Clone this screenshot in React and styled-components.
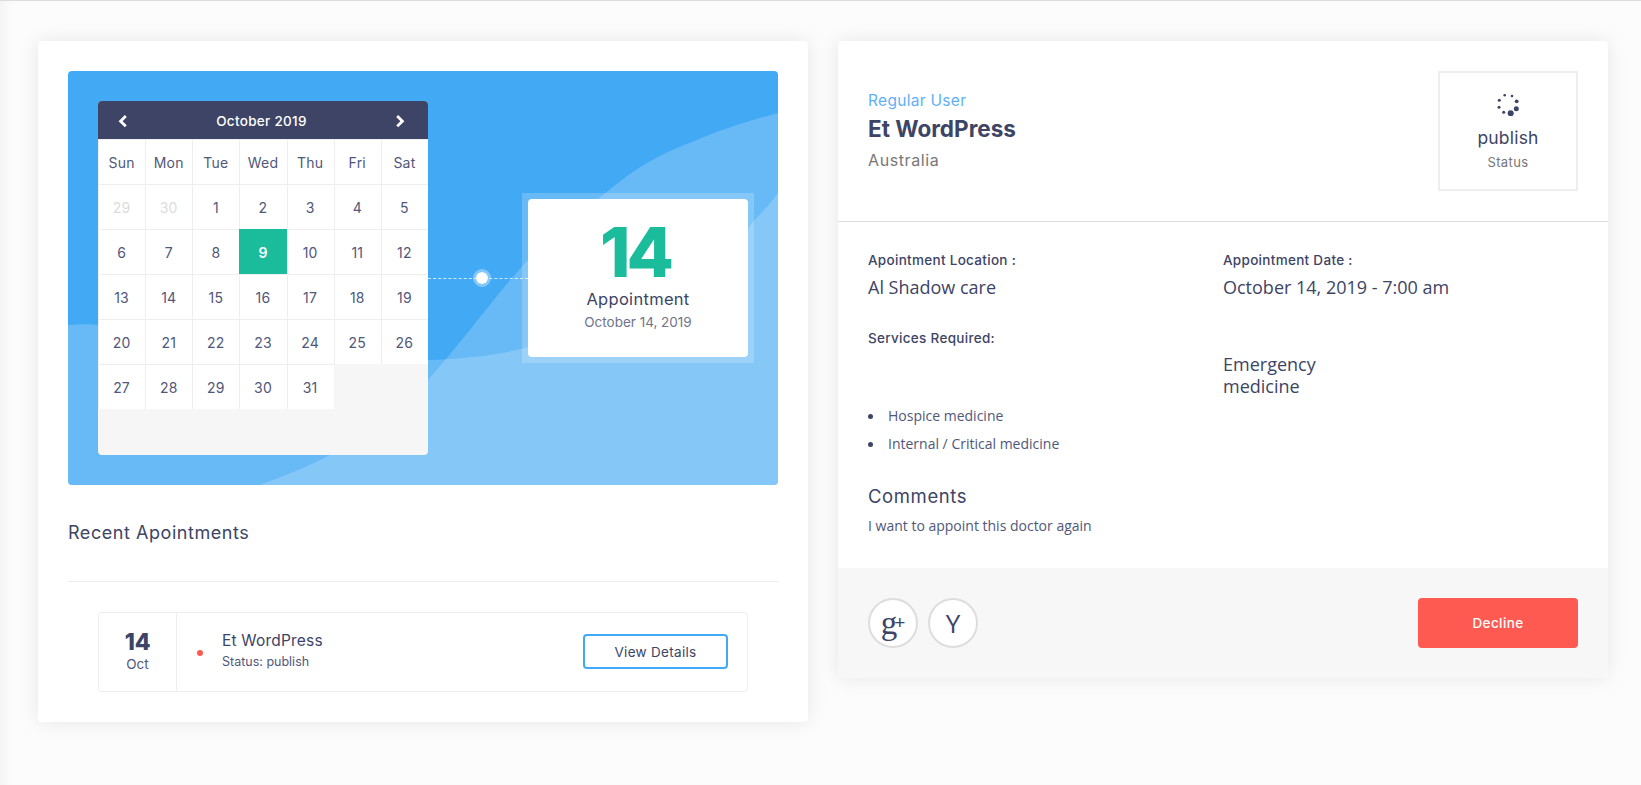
import React from 'react';
import styled, { createGlobalStyle } from 'styled-components';

const POP = `"Inter", "Noto Sans", sans-serif`;
const OPEN = `"Open Sans", "Noto Sans", sans-serif`;
const NAVY = '#3d4465';

const Global = createGlobalStyle`
  * { box-sizing: border-box; }
  html, body { margin: 0; padding: 0; background: #fcfcfc; overflow: hidden; }
  body { font-family: ${POP}; color: ${NAVY}; }
`;

const Page = styled.div`
  height: 785px;
  border-top: 1px solid #ddd;
  padding: 40px 33px 0 38px;
  display: grid;
  grid-template-columns: 770px 770px;
  gap: 30px;
  align-items: start;
  box-shadow: inset 12px 0 16px -10px rgba(0, 0, 0, 0.05);
`;

const Card = styled.section`
  background: #fff;
  border-radius: 4px;
  box-shadow: 0 0 20px rgba(0, 0, 0, 0.09);
`;

const LeftCard = styled(Card)`
  padding: 30px;
`;

const Hero = styled.div`
  position: relative;
  height: 414px;
  padding: 0 30px;
  background: #42a9f4;
  border-radius: 4px;
  overflow: hidden;
  display: flex;
  align-items: center;
`;

const Waves = styled.svg`
  position: absolute;
  inset: 0;
  width: 100%;
  height: 100%;
`;

const Calendar = styled.div`
  position: relative;
  width: 330px;
  height: 354px;
  flex: none;
  background: #f6f6f6;
  border-radius: 4px;
  overflow: hidden;
`;

const CalHead = styled.div`
  height: 38px;
  background: ${NAVY};
  display: flex;
  align-items: center;
  justify-content: space-between;
  padding: 2px 23px 0 20px;
  color: #fff;
  font-size: 13.5px;
  font-weight: 500;
  letter-spacing: 0.3px;
`;

const CalGrid = styled.div`
  display: grid;
  grid-template-columns: repeat(7, 1fr);
  grid-auto-rows: 45px;
`;

const Cell = styled.div`
  display: flex;
  align-items: center;
  justify-content: center;
  padding: 1px 1px 0 0;
  font-size: 14px;
  letter-spacing: 0.2px;
  background: ${p => (p.$active ? '#1abc9c' : '#fff')};
  color: ${p => (p.$active ? '#fff' : p.$muted ? '#dcdcdc' : '#50577a')};
  font-weight: ${p => (p.$active ? 600 : 400)};
  border-left: 1px solid ${p => (p.$active ? '#1abc9c' : '#eee')};
  border-top: 1px solid ${p => (p.$active ? '#1abc9c' : '#eee')};
`;

const Connector = styled.div`
  position: relative;
  width: 100px;
  flex: none;
  margin-right: -6px;
  border-top: 1px dashed rgba(255, 255, 255, 0.75);
`;

const Node = styled.span`
  position: absolute;
  left: 45px;
  top: -9.5px;
  width: 18px;
  height: 18px;
  border-radius: 50%;
  background: #fff;
  background-clip: padding-box;
  border: 3.5px solid rgba(255, 255, 255, 0.35);
`;

const ApptFrame = styled.div`
  position: relative;
  width: 232px;
  height: 170px;
  flex: none;
  padding: 6px;
  background: rgba(255, 255, 255, 0.2);
`;

const ApptCard = styled.div`
  height: 100%;
  background: #fff;
  border-radius: 4px;
  display: flex;
  flex-direction: column;
  align-items: center;
  text-align: center;
  padding-top: 25px;
`;

const BigDay = styled.div`
  font-size: 69px;
  line-height: 56px;
  font-weight: 800;
  color: #1abc9c;
  letter-spacing: -4px;
  padding-right: 6px;
`;

const ApptLabel = styled.div`
  margin-top: 8px;
  font-size: 16.5px;
  line-height: 22px;
  letter-spacing: 0.3px;
  color: ${NAVY};
`;

const ApptDate = styled.div`
  margin-top: 2px;
  font-size: 13.5px;
  line-height: 20px;
  color: #6f7488;
`;

const SectionTitle = styled.h3`
  margin: 33px 0 0;
  font-size: 18px;
  line-height: 30px;
  font-weight: 400;
  letter-spacing: 0.55px;
  color: ${NAVY};
`;

const Rule = styled.hr`
  margin: 33px 0 30px;
  border: 0;
  border-top: 1px solid #eee;
`;

const ListItem = styled.div`
  margin: 0 30px;
  height: 80px;
  border: 1px solid #eee;
  border-radius: 4px;
  display: flex;
  align-items: center;
  padding-right: 19px;
`;

const DateCol = styled.div`
  width: 78px;
  height: 100%;
  flex: none;
  border-right: 1px solid #eee;
  display: flex;
  flex-direction: column;
  align-items: center;
  justify-content: center;
`;

const DateNum = styled.div`
  font-size: 23px;
  line-height: 24px;
  font-weight: 800;
  letter-spacing: -0.3px;
`;

const DateMon = styled.div`
  font-size: 13.5px;
  line-height: 20px;
  color: #50577a;
`;

const StatusDot = styled.span`
  width: 6px;
  height: 6px;
  margin: 2px 19px 0 20px;
  flex: none;
  border-radius: 50%;
  background: #ff5a52;
`;

const ItemInfo = styled.div`
  flex: 1;
  padding-bottom: 4px;
`;

const ItemName = styled.div`
  font-size: 15.5px;
  line-height: 22px;
  letter-spacing: 0.2px;
  color: ${NAVY};
`;

const ItemStatus = styled.div`
  font-size: 12.5px;
  line-height: 18px;
  margin-top: 1px;
  color: #50577a;
`;

const OutlineButton = styled.button`
  width: 145px;
  height: 35px;
  margin-bottom: 1px;
  background: #fff;
  border: 2px solid #42a9f4;
  border-radius: 4px;
  font-family: ${POP};
  font-size: 13.5px;
  letter-spacing: 0.3px;
  color: ${NAVY};
`;

const RightHead = styled.header`
  height: 181px;
  padding: 30px;
  border-bottom: 1px solid #ddd;
  display: flex;
  justify-content: space-between;
`;

const Identity = styled.div`
  padding-top: 19px;
`;

const Role = styled.div`
  font-size: 15.5px;
  line-height: 22px;
  letter-spacing: 0.3px;
  color: #5fb0f7;
`;

const Name = styled.h2`
  margin: 3px 0 0;
  font-size: 22.5px;
  line-height: 28px;
  font-weight: 700;
  color: ${NAVY};
`;

const Country = styled.div`
  margin-top: 6px;
  font-size: 16px;
  line-height: 22px;
  letter-spacing: 0.6px;
  color: #777;
`;

const StatusBox = styled.div`
  width: 140px;
  height: 120px;
  border: 2px solid #eee;
  display: flex;
  flex-direction: column;
  align-items: center;
  padding-top: 19px;
`;

const StatusValue = styled.div`
  margin-top: 10px;
  font-size: 17.5px;
  line-height: 24px;
  letter-spacing: 0.2px;
  color: ${NAVY};
`;

const StatusCaption = styled.div`
  margin-top: 3px;
  font-size: 13px;
  line-height: 18px;
  letter-spacing: 0.4px;
  color: #777;
`;

const RightBody = styled.div`
  padding: 28px 30px 0;
  height: 346px;
`;

const TwoCol = styled.div`
  display: grid;
  grid-template-columns: 355px 1fr;
`;

const FieldLabel = styled.div`
  font-size: 13.5px;
  line-height: 20px;
  font-weight: 500;
  letter-spacing: 0.3px;
  color: ${NAVY};
`;

const FieldValue = styled.div`
  margin-top: 6px;
  font-family: ${OPEN};
  font-size: 18px;
  line-height: 22px;
  color: ${NAVY};
`;

const ServicesRow = styled(TwoCol)`
  margin-top: 30px;
`;

const EmergencyValue = styled(FieldValue)`
  margin-top: 25px;
`;

const Services = styled.ul`
  margin: 5px 0 0;
  padding: 0;
  list-style: none;
`;

const Service = styled.li`
  position: relative;
  padding-left: 20px;
  font-family: ${OPEN};
  font-size: 14px;
  line-height: 28px;
  color: #50577a;
  &::before {
    content: '';
    position: absolute;
    left: 0;
    top: 12px;
    width: 5px;
    height: 5px;
    border-radius: 50%;
    background: ${NAVY};
  }
`;

const CommentTitle = styled.h4`
  margin: 25px 0 0;
  font-size: 18.5px;
  line-height: 26px;
  font-weight: 400;
  letter-spacing: 0.6px;
  color: ${NAVY};
`;

const CommentText = styled.p`
  margin: 7px 0 0;
  font-family: ${OPEN};
  font-size: 14px;
  line-height: 20px;
  color: #50577a;
`;

const Footer = styled.footer`
  height: 110px;
  padding: 30px;
  background: #f7f7f7;
  border-radius: 0 0 4px 4px;
  display: flex;
  align-items: flex-start;
  gap: 10px;
`;

const Social = styled.a`
  width: 50px;
  height: 50px;
  border-radius: 50%;
  background: #fff;
  border: 2px solid #ddd;
  display: flex;
  align-items: center;
  justify-content: center;
  color: ${NAVY};
  font-family: ${p => (p.$serif ? `"Liberation Serif", serif` : OPEN)};
  font-size: ${p => (p.$serif ? '33px' : '26px')};
  line-height: 1;
`;

const Plus = styled.sup`
  font-size: 19px;
  font-family: "Liberation Sans", sans-serif;
  line-height: 0;
  vertical-align: 11px;
  margin-left: -3px;
`;

const Decline = styled.button`
  margin-left: auto;
  width: 160px;
  height: 50px;
  border: 0;
  border-radius: 4px;
  background: #ff5a52;
  color: #fff;
  font-family: ${POP};
  font-size: 13.5px;
  font-weight: 500;
  letter-spacing: 0.4px;
`;

const Chevron = ({ left }) => (
  <svg width="10" height="14" viewBox="0 0 10 14" fill="none">
    <path
      d={left ? 'M7.8 2 L2.6 7.2 L7.8 12.2' : 'M2.2 2 L7.4 7.2 L2.2 12.2'}
      stroke="#fff"
      strokeWidth="2.8"
    />
  </svg>
);

const Spinner = () => (
  <svg width="24" height="24" viewBox="0 0 24 24" fill={NAVY}>
    <circle cx="8.7" cy="3.3" r="1.3" />
    <circle cx="16" cy="4" r="1.3" />
    <circle cx="20.7" cy="9.3" r="1.9" />
    <circle cx="20.3" cy="16.7" r="2.5" />
    <circle cx="14.7" cy="21.3" r="3" />
    <circle cx="7.7" cy="20.3" r="1.5" />
    <circle cx="3" cy="15.3" r="1.5" />
    <circle cx="3.3" cy="8.3" r="1.5" />
  </svg>
);

const days = ['Sun', 'Mon', 'Tue', 'Wed', 'Thu', 'Fri', 'Sat'];
const dates = [
  ['29', true], ['30', true],
  ...Array.from({ length: 31 }, (_, i) => [String(i + 1), false]),
];

export default function App() {
  return (
    <>
      <Global />
      <Page>
        <LeftCard>
          <Hero>
            <Waves viewBox="0 0 710 414" preserveAspectRatio="none">
              <path
                d="M710 42 C680 50 655 58 629 69 C610 76 595 83 579 92 C560 103 545 116 530 128 C505 148 480 168 460 189 C430 221 395 270 360 309 C330 340 295 366 262 384 C240 396 215 405 192 414 L710 414 Z"
                fill="rgba(255,255,255,0.2)"
              />
              <path
                d="M0 254 C15 253 25 253 40 255 C150 275 260 292 360 289 C395 288 430 284 457 277 C540 255 640 215 685 151 C695 140 703 132 710 122 L710 414 L0 414 Z"
                fill="rgba(255,255,255,0.2)"
              />
            </Waves>
            <Calendar>
              <CalHead>
                <Chevron left />
                <span>October 2019</span>
                <Chevron />
              </CalHead>
              <CalGrid>
                {days.map(d => <Cell key={d}>{d}</Cell>)}
                {dates.map(([d, muted], i) => (
                  <Cell key={i} $muted={muted} $active={d === '9'}>{d}</Cell>
                ))}
              </CalGrid>
            </Calendar>
            <Connector><Node /></Connector>
            <ApptFrame>
              <ApptCard>
                <BigDay>14</BigDay>
                <ApptLabel>Appointment</ApptLabel>
                <ApptDate>October 14, 2019</ApptDate>
              </ApptCard>
            </ApptFrame>
          </Hero>
          <SectionTitle>Recent Apointments</SectionTitle>
          <Rule />
          <ListItem>
            <DateCol>
              <DateNum>14</DateNum>
              <DateMon>Oct</DateMon>
            </DateCol>
            <StatusDot />
            <ItemInfo>
              <ItemName>Et WordPress</ItemName>
              <ItemStatus>Status: publish</ItemStatus>
            </ItemInfo>
            <OutlineButton>View Details</OutlineButton>
          </ListItem>
        </LeftCard>

        <Card>
          <RightHead>
            <Identity>
              <Role>Regular User</Role>
              <Name>Et WordPress</Name>
              <Country>Australia</Country>
            </Identity>
            <StatusBox>
              <Spinner />
              <StatusValue>publish</StatusValue>
              <StatusCaption>Status</StatusCaption>
            </StatusBox>
          </RightHead>
          <RightBody>
            <TwoCol>
              <div>
                <FieldLabel>Apointment Location :</FieldLabel>
                <FieldValue>Al Shadow care</FieldValue>
              </div>
              <div>
                <FieldLabel>Appointment Date :</FieldLabel>
                <FieldValue>October 14, 2019 - 7:00 am</FieldValue>
              </div>
            </TwoCol>
            <ServicesRow>
              <FieldLabel>Services Required:</FieldLabel>
              <EmergencyValue>Emergency<br />medicine</EmergencyValue>
            </ServicesRow>
            <Services>
              <Service>Hospice medicine</Service>
              <Service>Internal / Critical medicine</Service>
            </Services>
            <CommentTitle>Comments</CommentTitle>
            <CommentText>I want to appoint this doctor again</CommentText>
          </RightBody>
          <Footer>
            <Social $serif>g<Plus>+</Plus></Social>
            <Social>Y</Social>
            <Decline>Decline</Decline>
          </Footer>
        </Card>
      </Page>
    </>
  );
}
